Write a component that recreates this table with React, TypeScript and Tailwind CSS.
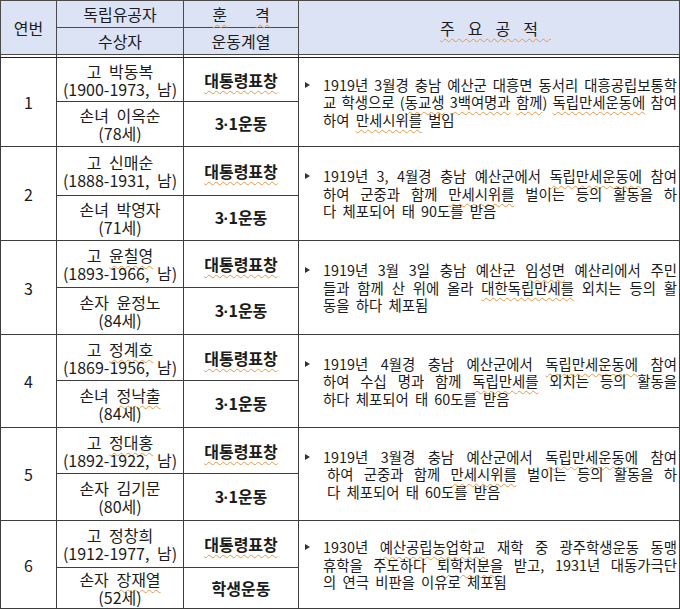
import React from 'react'

const U = 'underline decoration-wavy decoration-[#e29a45] decoration-1 underline-offset-[3px]'

// ~word~ marks a spell-check underline
function Rich({ text }: { text: string }) {
  const parts = text.split('~')
  return (
    <>
      {parts.map((p, i) =>
        i % 2 ? (
          <span key={i} className={U}>
            {p}
          </span>
        ) : (
          <React.Fragment key={i}>{p}</React.Fragment>
        )
      )}
    </>
  )
}

type Row = {
  no: string
  name: string
  years: string
  rel: string
  age: string
  movement: string
  bold: string
  topH: string
  botH: string
  indent?: boolean
  lines: string[]
}

const rows: Row[] = [
  {
    no: '1',
    name: '고 박동복',
    years: '(1900-1973, 남)',
    rel: '손녀 이옥순',
    age: '(78세)',
    movement: '3·1운동',
    bold: 'font-bold',
    topH: 'h-[44px]',
    botH: 'h-[45px]',
    lines: [
      '1919년 3월경 충남 예산군 대흥면 동서리 대흥공립보통학',
      '교 학생으로 (~동교생~ ~3백여명과~ ~함께~) ~독립만세운동에~ 참여',
      '하여 ~만세시위를~ 벌임',
    ],
  },
  {
    no: '2',
    name: '고 신매순',
    years: '(1888-1931, 남)',
    rel: '손녀 박영자',
    age: '(71세)',
    movement: '3·1운동',
    bold: 'font-bold',
    topH: 'h-[49px]',
    botH: 'h-[45px]',
    lines: [
      '1919년 3, 4월경 충남 예산군에서 ~독립만세운동에~ 참여',
      '하여 군중과 함께 ~만세시위를~ 벌이는 등의 활동을 하',
      '다 체포되어 태 90도를 받음',
    ],
  },
  {
    no: '3',
    name: '고 ~윤칠영~',
    years: '(1893-1966, 남)',
    rel: '손자 윤정노',
    age: '(84세)',
    movement: '3·1운동',
    bold: 'font-bold',
    topH: 'h-[47px]',
    botH: 'h-[47px]',
    lines: [
      '1919년 3월 3일 충남 예산군 ~임성면~ 예산리에서 주민',
      '들과 함께 산 위에 올라 ~대한독립만세를~ 외치는 등의 활',
      '동을 하다 체포됨',
    ],
  },
  {
    no: '4',
    name: '고 ~정계호~',
    years: '(1869-1956, 남)',
    rel: '손녀 ~정낙출~',
    age: '(84세)',
    movement: '3·1운동',
    bold: 'font-bold',
    topH: 'h-[46px]',
    botH: 'h-[47px]',
    lines: [
      '1919년 4월경 충남 예산군에서 ~독립만세운동에~ 참여',
      '하여 수십 명과 함께 ~독립만세를~ 외치는 등의 활동을',
      '하다 체포되어 태 60도를 받음',
    ],
  },
  {
    no: '5',
    name: '고 ~정대홍~',
    years: '(1892-1922, 남)',
    rel: '손자 김기문',
    age: '(80세)',
    movement: '3·1운동',
    bold: 'font-bold',
    topH: 'h-[46px]',
    botH: 'h-[47px]',
    indent: true,
    lines: [
      '1919년 3월경 충남 예산군에서 ~독립만세운동에~ 참여',
      '하여 군중과 함께 ~만세시위를~ 벌이는 등의 활동을 하',
      '다 체포되어 태 60도를 받음',
    ],
  },
  {
    no: '6',
    name: '고 정창희',
    years: '(1912-1977, 남)',
    rel: '손자 ~장재열~',
    age: '(52세)',
    movement: '학생운동',
    bold: 'font-semibold',
    topH: 'h-[47px]',
    botH: 'h-[41px]',
    lines: [
      '1930년 ~예산공립농업학교~ 재학 중 광주학생운동 동맹',
      '휴학을 주도하다 ~퇴학처분을~ 받고, 1931년 대동가극단',
      '의 연극 비판을 이유로 체포됨',
    ],
  },
]

const cell = 'border border-[#3d3d3d] p-0 text-center align-middle'
const head = 'border border-[#4a4a4a] p-0 text-center align-middle font-normal bg-[#dce3f5]'
const spacer = 'border-x border-t border-x-[#3d3d3d] border-t-[#6a6a6a] border-b border-b-[#222] p-0'

function Movement({ text }: { text: string }) {
  // the middle dot of 3·1 is narrow in the source document
  if (!text.includes('·')) return <>{text}</>
  const [a, b] = text.split('·')
  return (
    <>
      {a}
      <span className="font-['Liberation_Sans',sans-serif] mx-[-0.5px]">·</span>
      {b}
    </>
  )
}

// a fully justified line: words spread edge to edge
function JustLine({ text, className }: { text: string; className: string }) {
  return (
    <div className={`flex justify-between whitespace-nowrap ${className}`}>
      {text.split(' ').map((w, i) => (
        <span key={i}>
          <Rich text={w} />
        </span>
      ))}
    </div>
  )
}

function Bullet() {
  return (
    <svg width="5" height="6" viewBox="0 0 5 6" className="mt-[6px] shrink-0">
      <path d="M0 0 L5 3 L0 6 Z" fill="#333" />
    </svg>
  )
}

export default function App() {
  return (
    <div className="w-[680px] h-[610px] bg-white overflow-hidden font-['Noto_Sans_CJK_KR','Noto_Sans',sans-serif] text-[#1b1b1b]">
      <table className="w-[679px] table-fixed border-collapse text-[16px]">
        <colgroup>
          <col className="w-[56px]" />
          <col className="w-[127px]" />
          <col className="w-[115px]" />
          <col className="w-[381px]" />
        </colgroup>
        <thead>
          <tr className="h-[27px]">
            <th rowSpan={2} className={head}>
              연번
            </th>
            <th className={head}>독립유공자</th>
            <th className={head}>
              <span className={U}>훈</span>
              <span className={`${U} ml-[28px]`}>격</span>
            </th>
            <th rowSpan={2} className={head}>
              <span className={`${U} tracking-[13px] -mr-[13px]`}>주요공적</span>
            </th>
          </tr>
          <tr className="h-[27px]">
            <th className={head}>수상자</th>
            <th className={head}>운동계열</th>
          </tr>
          <tr className="h-[3px] leading-[0] text-[0px]">
            <td className={spacer} />
            <td className={spacer} />
            <td className={spacer} />
            <td className={spacer} />
          </tr>
        </thead>
        <tbody>
          {rows.map((r) => (
            <React.Fragment key={r.no}>
              <tr className={r.topH}>
                <td rowSpan={2} className={cell}>
                  {r.no}
                </td>
                <td className={`${cell} leading-[18px] [word-spacing:4px]`}>
                  <div>
                    <Rich text={r.name} />
                  </div>
                  <div>{r.years}</div>
                </td>
                <td className={`${cell} ${r.bold}`}>
                  <span className={U}>대통령표창</span>
                </td>
                <td rowSpan={2} className={`${cell} text-left`}>
                  <div className="flex items-start pl-[6px] pr-[2px] text-[14.4px] leading-[17.5px]">
                    <Bullet />
                    <div className="flex-1 min-w-0 ml-[13px]">
                      {r.lines.map((l, i) => {
                        const pad = r.indent && i > 0 ? 'pl-[4px]' : ''
                        return i === r.lines.length - 1 ? (
                          <div key={i} className={`text-left [word-spacing:3px] ${pad}`}>
                            <Rich text={l} />
                          </div>
                        ) : (
                          <JustLine key={i} text={l} className={pad} />
                        )
                      })}
                    </div>
                  </div>
                </td>
              </tr>
              <tr className={r.botH}>
                <td className={`${cell} leading-[18px] [word-spacing:4px]`}>
                  <div>
                    <Rich text={r.rel} />
                  </div>
                  <div>{r.age}</div>
                </td>
                <td className={`${cell} ${r.bold}`}>
                  <Movement text={r.movement} />
                </td>
              </tr>
            </React.Fragment>
          ))}
        </tbody>
      </table>
    </div>
  )
}
